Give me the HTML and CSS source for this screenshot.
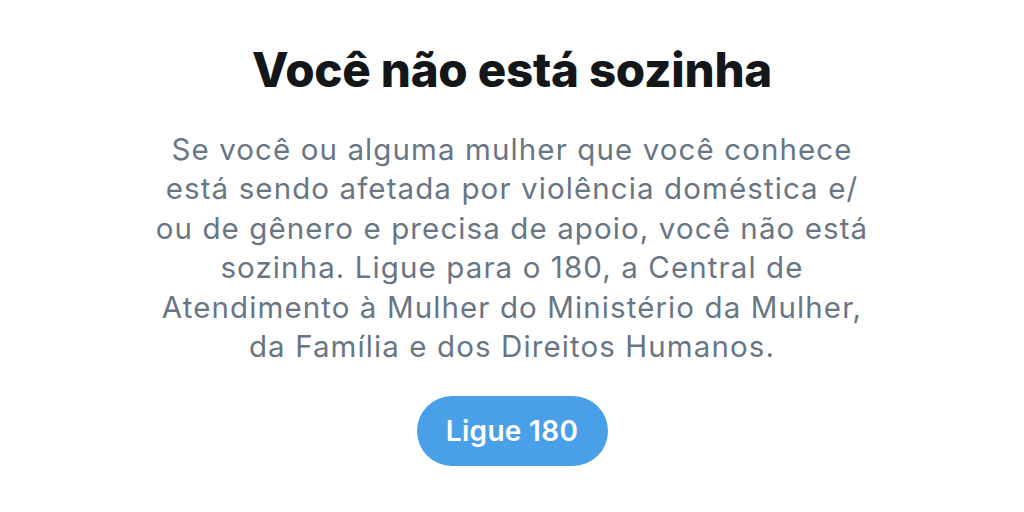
FILE: index.html
```html
<!DOCTYPE html>
<html lang="pt-BR">
<head>
<meta charset="utf-8">
<link rel="stylesheet" href="styles.css">
</head>
<body>
<main class="notice">
  <h1 class="title">Você não está sozinha</h1>
  <p class="text">Se você ou alguma mulher que você conhece<br>está sendo afetada por violência doméstica e/<br>ou de gênero e precisa de apoio, você não está<br>sozinha. Ligue para o 180, a Central de<br>Atendimento à Mulher do Ministério da Mulher,<br>da Família e dos Direitos Humanos.</p>
  <button class="cta">Ligue 180</button>
</main>
</body>
</html>
```
FILE: styles.css
```css
html, body {
  margin: 0;
  padding: 0;
  background: #ffffff;
}
body {
  font-family: Inter, "Noto Sans", sans-serif;
  width: 1024px;
  height: 512px;
  overflow: hidden;
}
.notice {
  display: flex;
  flex-direction: column;
  align-items: center;
  padding-top: 42px;
}
.title {
  margin: 0;
  font-size: 47.5px;
  font-weight: 800;
  line-height: 56px;
  color: #14171a;
  letter-spacing: -0.25px;
}
.text {
  margin: 31.5px 0 0;
  font-size: 29.5px;
  line-height: 39.5px;
  letter-spacing: 1.1px;
  color: #687684;
  text-align: center;
}
.cta {
  margin-top: 29.5px;
  width: 191px;
  height: 70px;
  border: none;
  border-radius: 35px;
  background: #4a9fe9;
  color: #ffffff;
  font-family: Inter, "Noto Sans", sans-serif;
  font-size: 28px;
  font-weight: 600;
  letter-spacing: 0.3px;
}
```
